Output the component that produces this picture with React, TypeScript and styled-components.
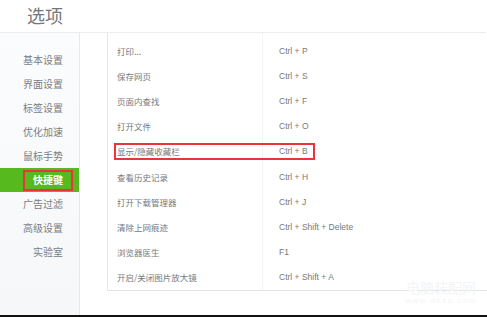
import React from "react";
import styled, {createGlobalStyle} from "styled-components";

const GlobalStyle = createGlobalStyle`
    html, body {
        margin: 0;
        padding: 0;
        background: #fff;
    }
    body {
        font-family: "Liberation Sans", "Noto Sans CJK SC", sans-serif;
    }
`;

const Page = styled.div`
    width: 487px;
    height: 317px;
    display: flex;
    flex-direction: column;
    position: relative;
    overflow: hidden;
    border-bottom: 2px solid #111;
    box-sizing: border-box;
`;

const Header = styled.div`
    height: 32px;
    flex: none;
    border-bottom: 1px solid #ececec;
    margin-right: 1px;
    display: flex;
    align-items: center;
    padding-left: 27px;
    .title {
        font-size: 18px;
        color: #74787d;
        font-family: "Noto Sans CJK SC", sans-serif;
        line-height: 18px;
        margin-top: -3px;
    }
`;

const Body = styled.div`
    flex: 1;
    display: flex;
    min-height: 0;
`;

const Side = styled.div`
    width: 80px;
    flex: none;
    border-right: 1px solid #e6e8ea;
    background: linear-gradient(to bottom, #fbfcfd, #f6f7f9);
    padding-top: 15px;
    box-sizing: border-box;
`;

const SideItem = styled.div<{ active?: boolean }>`
    height: 24px;
    line-height: 24px;
    text-align: right;
    padding-right: 16px;
    font-size: 10px;
    font-family: "Noto Sans CJK SC", sans-serif;
    color: ${props => props.active ? "#fff" : "#7a7d82"};
    background: ${props => props.active ? "#56b91d" : "transparent"};
    font-weight: ${props => props.active ? "bold" : "normal"};
    position: relative;
    .mark {
        position: absolute;
        left: 23px;
        right: 6px;
        top: 2px;
        bottom: 1px;
        border: 2px solid #e8343a;
    }
`;

const Gap = styled.div`
    width: 27px;
    flex: none;
`;

const Table = styled.div`
    flex: 1;
    height: 258px;
    border-left: 1px solid #e3e7e8;
    border-bottom: 1px solid #dfe5e6;
    padding-top: 5px;
    box-sizing: border-box;
    position: relative;
    &::before {
        content: "";
        position: absolute;
        left: 154px;
        top: 0;
        bottom: 0;
        width: 1px;
        background: #f3f4f5;
    }
`;

const Row = styled.div`
    height: 25.2px;
    display: flex;
    align-items: center;
    position: relative;
    font-size: 8.5px;
    color: #76797e;
    .name {
        width: 171px;
        padding-left: 9px;
        box-sizing: border-box;
        font-family: "Noto Sans CJK SC", sans-serif;
    }
    .keys {
        font-family: "Liberation Sans", sans-serif;
        white-space: nowrap;
    }
    .mark {
        position: absolute;
        left: 6px;
        width: 201px;
        height: 17px;
        top: 4px;
        border: 2px solid #e8343a;
        box-sizing: border-box;
    }
`;

const Watermark = styled.div`
    position: absolute;
    right: 10px;
    bottom: 8px;
    text-align: center;
    color: #f2f4f5;
    pointer-events: none;
    .cn {
        font-family: "Noto Sans CJK SC", sans-serif;
        font-size: 14px;
        line-height: 16px;
    }
    .en {
        font-size: 8px;
        letter-spacing: 1.5px;
        line-height: 12px;
    }
`;

const sideItems = ["基本设置", "界面设置", "标签设置", "优化加速", "鼠标手势", "快捷键", "广告过滤", "高级设置", "实验室"];

const shortcuts = [
    ["打印...", "Ctrl + P"],
    ["保存网页", "Ctrl + S"],
    ["页面内查找", "Ctrl + F"],
    ["打开文件", "Ctrl + O"],
    ["显示/隐藏收藏栏", "Ctrl + B"],
    ["查看历史记录", "Ctrl + H"],
    ["打开下载管理器", "Ctrl + J"],
    ["清除上网痕迹", "Ctrl + Shift + Delete"],
    ["浏览器医生", "F1"],
    ["开启/关闭图片放大镜", "Ctrl + Shift + A"],
];

const App: React.FC = () => {
    return <>
        <GlobalStyle />
        <Page>
            <Header>
                <span className="title">选项</span>
            </Header>
            <Body>
                <Side>
                    {sideItems.map(item => {
                        const active = item === "快捷键";
                        return <SideItem key={item} active={active}>
                            {active && <span className="mark" />}
                            {item}
                        </SideItem>
                    })}
                </Side>
                <Gap />
                <Table>
                    {shortcuts.map(([name, keys]) => {
                        return <Row key={name}>
                            {name === "显示/隐藏收藏栏" && <span className="mark" />}
                            <span className="name">{name}</span>
                            <span className="keys">{keys}</span>
                        </Row>
                    })}
                </Table>
            </Body>
            <Watermark>
                <div className="cn">电脑装配网</div>
                <div className="en">www.dnzp.com</div>
            </Watermark>
        </Page>
    </>
}
export default App;
